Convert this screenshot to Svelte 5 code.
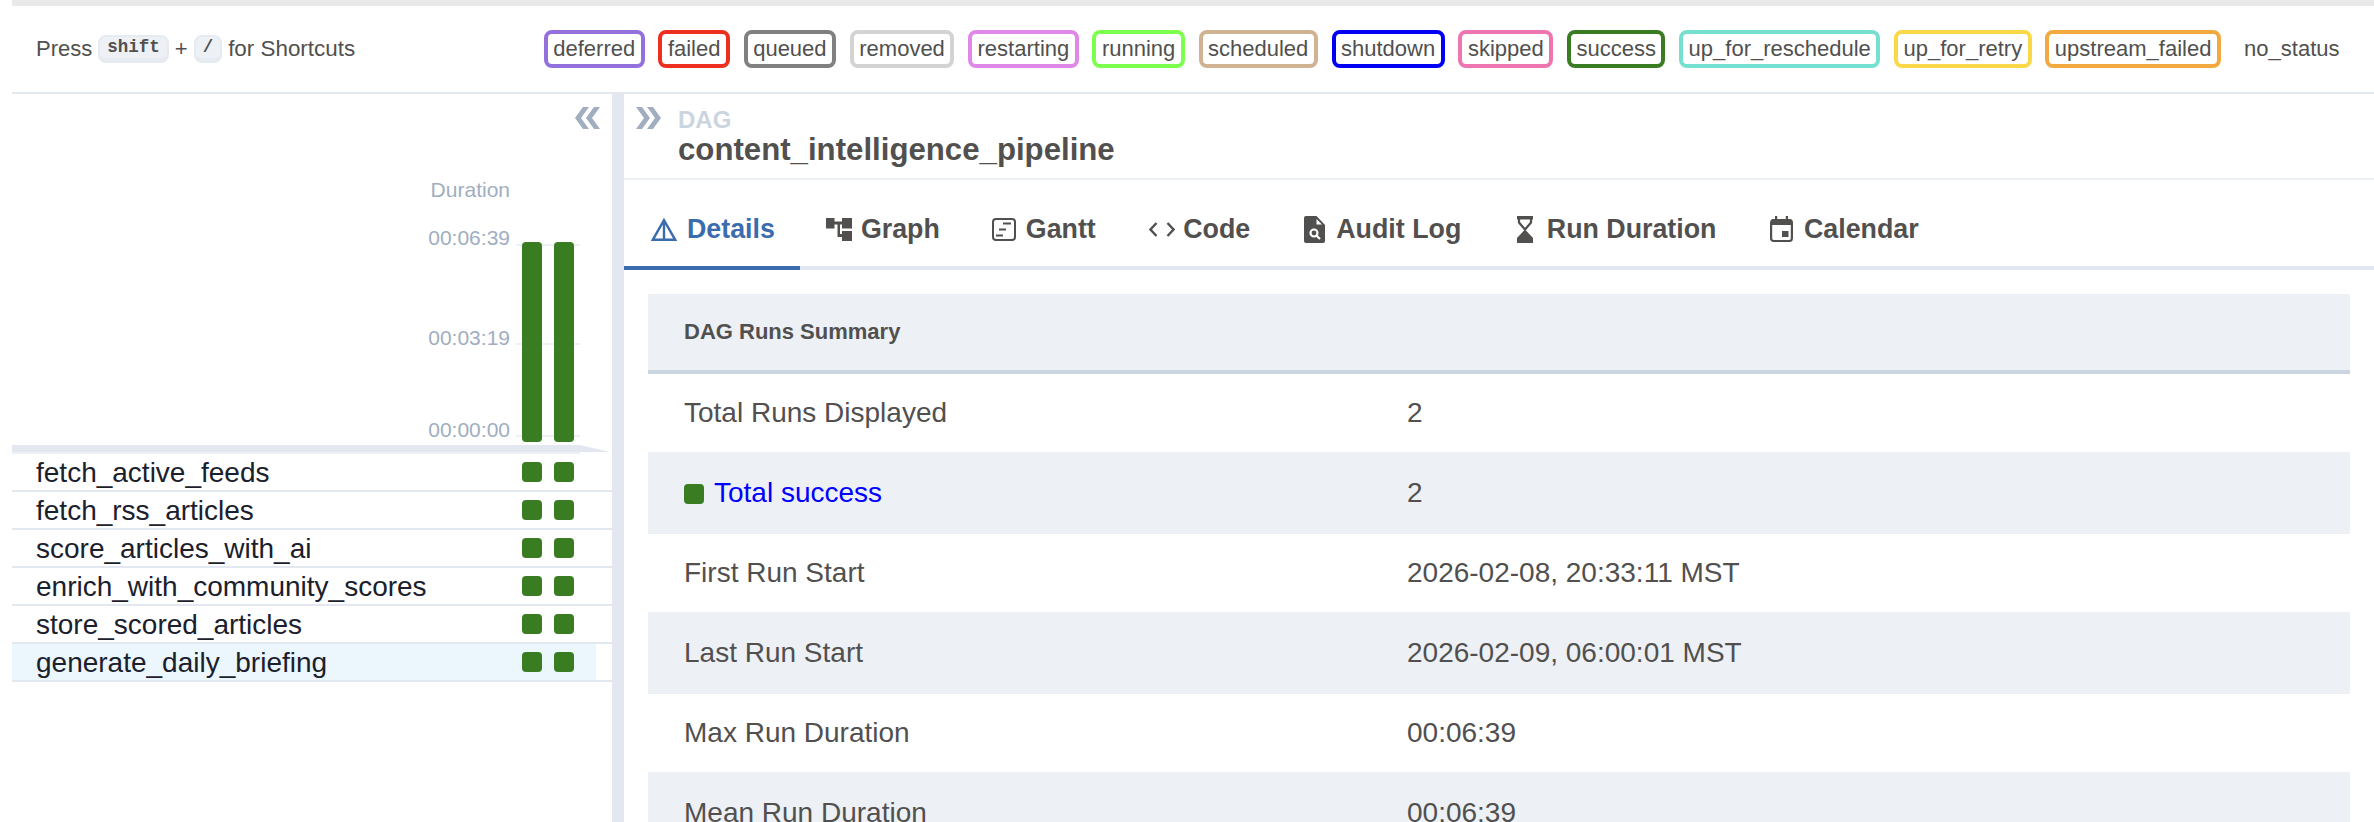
<script>
  const states = [
    ['deferred', '#9370db'], ['failed', '#ed2f20'], ['queued', '#808080'], ['removed', '#d3d3d3'],
    ['restarting', '#e088e8'], ['running', '#7dff4d'], ['scheduled', '#cfb392'], ['shutdown', '#0000f5'],
    ['skipped', '#ef75b0'], ['success', '#3a7c22'], ['up_for_reschedule', '#76e0d0'], ['up_for_retry', '#fbd848'],
    ['upstream_failed', '#f2a93f'], ['no_status', 'transparent']
  ];
  const tasks = ['fetch_active_feeds', 'fetch_rss_articles', 'score_articles_with_ai', 'enrich_with_community_scores', 'store_scored_articles', 'generate_daily_briefing'];
  const rows = [
    ['First Run Start', '2026-02-08, 20:33:11 MST'],
    ['Last Run Start', '2026-02-09, 06:00:01 MST'],
    ['Max Run Duration', '00:06:39'],
    ['Mean Run Duration', '00:06:39']
  ];
</script>

<div class="page">
  <div class="strip"></div>
  <header class="header">
    <div class="hint">
      <span>Press</span><kbd>shift</kbd><span>+</span><kbd>/</kbd><span class="for">for Shortcuts</span>
    </div>
    <div class="badges">
      {#each states as [name, color]}
        <span class="badge" style:border-color={color}>{name}</span>
      {/each}
    </div>
  </header>

  <main class="main">
    <aside class="left">
      <div class="collapse">
        <svg width="25" height="22" viewBox="0 0 25 22"><path d="M8 0h6L6 11l8 11H8L0 11zM19 0h6l-8 11 8 11h-6L11 11z" fill="#a0aec0"/></svg>
      </div>
      <div class="duration">Duration</div>
      <div class="chart">
        <div class="ticks">
          <div class="tick"><span>00:06:39</span><i></i></div>
          <div class="tick"><span>00:03:19</span><i></i></div>
          <div class="tick"><span>00:00:00</span><i></i></div>
        </div>
        <div class="bars"><b></b><b></b></div>
      </div>
      <div class="band"></div>
      <div class="bandline"></div>
      {#each tasks as task, i}
        <div class="row">
          <div class="rowinner" class:selected={i === tasks.length - 1}>
            <span class="task">{task}</span>
            <span class="squares"><b></b><b></b></span>
          </div>
        </div>
      {/each}
    </aside>

    <div class="divider"></div>

    <section class="right">
      <div class="dag">
        <svg class="expand" width="25" height="22" viewBox="0 0 25 22"><path d="M0 0h6l8 11-8 11H0l8-11zM11 0h6l8 11-8 11h-6l8-11z" fill="#a0aec0"/></svg>
        <div class="dagtext">
          <div class="daglabel">DAG</div>
          <div class="dagname">content_intelligence_pipeline</div>
        </div>
      </div>

      <nav class="tabs">
        <div class="tab active">
          <svg class="ic-details" width="26" height="23" viewBox="0 0 26 23" fill="none" stroke="currentColor" stroke-width="2.4"><path d="M13 2.2 1.8 21.8h22.4z"/><path d="M13 3v18.5"/></svg>
          Details
        </div>
        <div class="tab">
          <svg class="ic-graph" width="26" height="23" viewBox="0 0 26 23" fill="currentColor"><path d="M0 0h8.5v3.5H16V0h10v10.5H16V6.5h-2V16h2v-3h10v10H16v-4h-4.500V6.500H8.500V10.500H0z"/></svg>
          Graph
        </div>
        <div class="tab">
          <svg class="ic-gantt" width="24" height="23" viewBox="0 0 24 23" fill="none" stroke="currentColor" stroke-width="2"><rect x="1" y="1" width="22" height="21" rx="3"/><path d="M11 5.500h8M7 11.500h7M4 17.500h7"/></svg>
          Gantt
        </div>
        <div class="tab">
          <svg class="ic-code" width="26" height="15" viewBox="0 0 26 15" fill="none" stroke="currentColor" stroke-width="2.400"><path d="M7.500 1 1.500 7.500l6 6.500M18.500 1l6 6.500-6 6.500"/></svg>
          Code
        </div>
        <div class="tab">
          <svg class="ic-audit" width="21" height="27" viewBox="0 0 21 27"><path d="M2 0h10.500L21 9v16a2 2 0 0 1-2 2H2a2 2 0 0 1-2-2V2a2 2 0 0 1 2-2z" fill="currentColor"/><path d="M12.500 3 18 8.500h-5.500z" fill="#fff"/><circle cx="10" cy="17" r="3.500" fill="none" stroke="#fff" stroke-width="2.200"/><path d="m12.500 19.500 3.500 3.500" stroke="#fff" stroke-width="2.200"/></svg>
          Audit Log
        </div>
        <div class="tab">
          <svg class="ic-hour" width="16" height="27" viewBox="0 0 16 27"><path d="M0 0h16v3.500H0z" fill="currentColor"/><path d="M2 3v3.500L8 13.500l6-7V3" fill="none" stroke="currentColor" stroke-width="2.200"/><path d="M8 13.500 16 22v5H0v-5z" fill="currentColor"/></svg>
          Run Duration
        </div>
        <div class="tab">
          <svg class="ic-cal" width="23" height="26" viewBox="0 0 23 26"><rect x="1.100" y="4" width="20.800" height="21" rx="2.500" fill="none" stroke="currentColor" stroke-width="2.200"/><path d="M1 5.500A2.500 2.500 0 0 1 3.500 3H5V0h2.200v3h8.600V0H18v3h1.500A2.500 2.500 0 0 1 22 5.500V9H1z" fill="currentColor"/><rect x="12" y="15" width="6.500" height="6" fill="currentColor"/></svg>
          Calendar
        </div>
      </nav>

      <div class="content">
        <table>
          <colgroup><col class="c1" /><col /></colgroup>
          <thead><tr><th colspan="2">DAG Runs Summary</th></tr></thead>
          <tbody>
            <tr><td>Total Runs Displayed</td><td>2</td></tr>
            <tr><td><span class="sq"></span><span class="link">Total success</span></td><td>2</td></tr>
            {#each rows as [k, v]}
              <tr><td>{k}</td><td>{v}</td></tr>
            {/each}
          </tbody>
        </table>
      </div>
    </section>
  </main>
</div>

<style>
  :global(body) { margin: 0; background: #fff; }
  .page {
    height: 822px; overflow: hidden; padding-left: 12px; box-sizing: border-box;
    font-family: "Liberation Sans", Arial, sans-serif; color: #51504f;
  }
  .strip { height: 6px; background: #e9e9e9; }
  .header {
    height: 86px; border-bottom: 2px solid #e2e7f0; display: flex; align-items: center;
    justify-content: space-between; padding: 0 25px 0 24px; font-size: 22px;
  }
  .hint { display: flex; align-items: center; gap: 6px; }
  .for { font-size: 22.400px; }
  kbd {
    display: block; height: 28px; box-sizing: border-box; padding: 0 7px;
    background: #edf0f5; border: 2px solid #e6eaf1; border-bottom-width: 5px; border-radius: 8px;
    font: bold 17.500px/20px "Liberation Mono", monospace; color: #51504f;
  }
  .badges { display: flex; gap: 13.700px; }
  .badge {
    height: 38px; box-sizing: border-box; line-height: 30px; padding: 0 5.500px;
    border: 4px solid; border-radius: 8px; white-space: nowrap;
  }
  .main { display: flex; height: 728px; }
  .left { width: 600px; flex: none; overflow: hidden; }
  .divider { width: 12px; flex: none; background: #e2e7f0; }
  .right { flex: 1; min-width: 0; }

  .collapse { display: flex; justify-content: flex-end; padding: 13px 12px 0 0; height: 22px; }
  .duration { margin-top: 49px; width: 498px; text-align: right; font-size: 21px; line-height: 24px; color: #a0aec0; }
  .chart { display: grid; margin-top: 24px; height: 219px; }
  .ticks, .bars { grid-area: 1 / 1; }
  .tick { display: flex; height: 24px; font-size: 21px; line-height: 24px; color: #a0aec0; }
  .tick span { width: 498px; text-align: right; }
  .tick i { width: 64px; height: 2px; margin: 18px 0 0 6px; background: #edf0f5; }
  .tick:nth-child(2) { margin-top: 76px; }
  .tick:nth-child(2) i { margin-top: 17px; }
  .tick:nth-child(3) { margin-top: 68px; }
  .tick:nth-child(3) i { margin-top: 17px; }
  .bars { display: flex; gap: 12px; padding: 16px 0 0 510px; }
  .bars b { width: 20px; height: 200px; background: #3a7c22; border-radius: 4px; }
  .band { width: 598px; height: 7px; background: #e2e7f0; clip-path: polygon(0 0, 568px 0, 100% 100%, 0 100%); }
  .bandline { width: 568px; height: 2px; background: #edf0f5; }

  .row { border-bottom: 2px solid #e2e7f0; height: 38px; box-sizing: border-box; }
  .rowinner {
    width: 584px; height: 36px; display: grid; grid-template-columns: 510px auto; align-items: center;
  }
  .selected { background: #ebf6fd; }
  .task { padding: 2px 0 0 24px; font-size: 28px; line-height: 34px; color: #1a202c; white-space: nowrap; }
  .squares { display: flex; gap: 12px; }
  .squares b { width: 20px; height: 20px; border-radius: 4px; background: #3a7c22; }

  .dag { display: flex; height: 71px; border-bottom: 2px solid #edf0f5; padding: 13px 0 0 12px; gap: 17px; }
  .expand { flex: none; }
  .dagtext { padding-top: 1px; }
  .daglabel { font-size: 24px; font-weight: bold; line-height: 24px; color: #cbd5e0; }
  .dagname { font-size: 31.200px; font-weight: bold; line-height: 36px; white-space: nowrap; }

  .tabs { display: flex; height: 86px; border-bottom: 4px solid #e2e7f0; }
  .tab {
    display: flex; align-items: center; padding: 12px 25px 0 27px; height: 74px;
    font-size: 26.800px; font-weight: bold; white-space: nowrap; border-bottom: 4px solid transparent;
  }
  .tab svg { margin-right: 10px; flex: none; }
  .active { color: #3b6cad; border-bottom-color: #3b6cad; }
  .tab .ic-graph { margin-right: 9px; margin-left: -1px; }
  .tab .ic-code { margin: 0 8px 0 1.500px; }
  .tab .ic-audit { margin: 0 11px 0 2px; }
  .tab .ic-hour { margin: 0 14px 0 3.500px; }
  .tab .ic-cal { margin: 0 11px 0 1.500px; }

  .content { padding: 24px 24px 0; }
  table { width: 100%; border-collapse: collapse; table-layout: fixed; font-size: 28px; }
  .c1 { width: 723px; }
  th {
    height: 76px; padding: 0 0 0 36px; text-align: left; font-size: 22px; font-weight: bold;
    background: #edf0f5; border-bottom: 4px solid #cbd5e0;
  }
  td { padding: 0 0 0 36px; height: 78px; }
  tbody tr:nth-child(even) td { height: 82px; background: #edf0f5; }
  .sq { display: inline-block; width: 20px; height: 20px; border-radius: 4px; background: #3a7c22; margin-right: 10px; vertical-align: -2px; }
  .link { color: #0000ff; }
</style>
